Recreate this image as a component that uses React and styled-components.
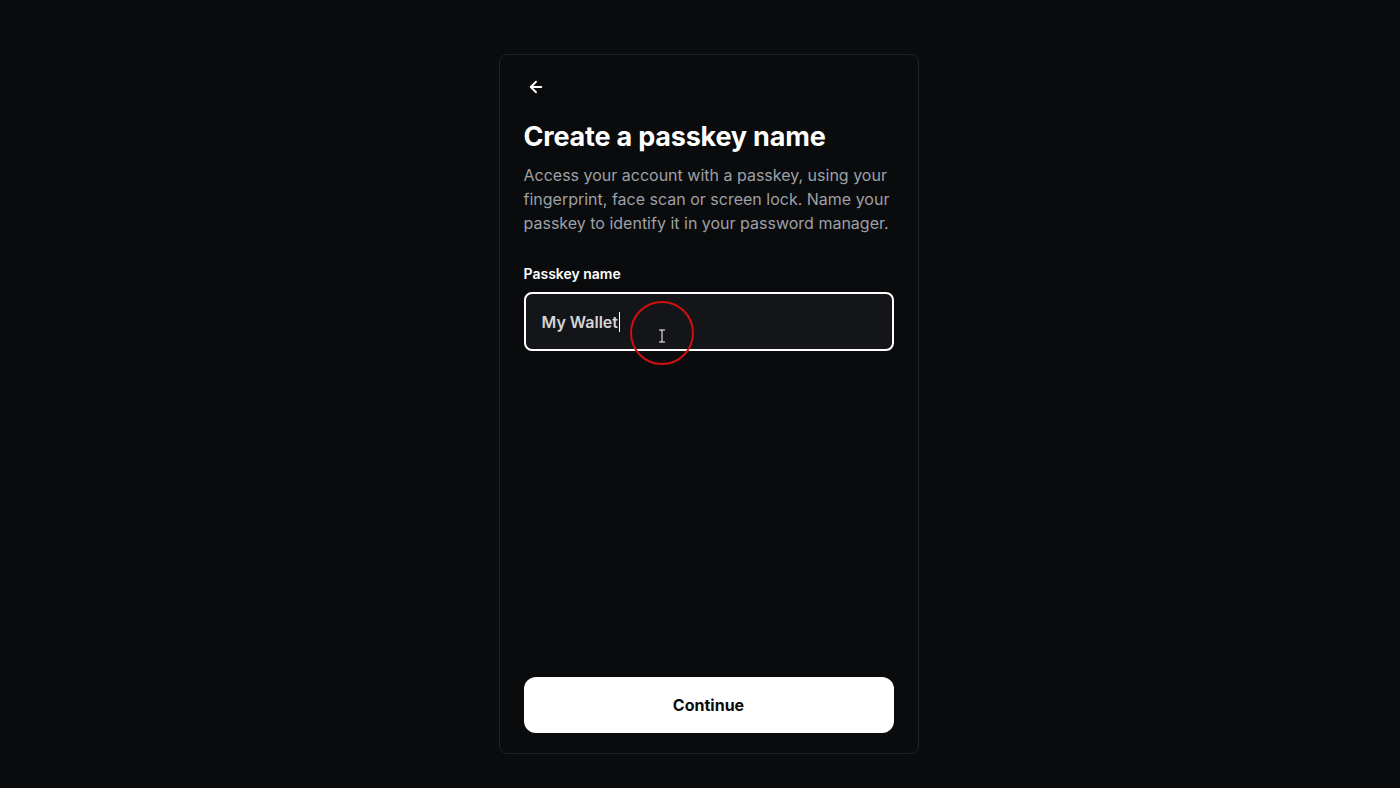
import React from 'react'
import styled, { createGlobalStyle } from 'styled-components'
import { ArrowLeft } from 'lucide-react'

const GlobalStyle = createGlobalStyle`
    html, body {
        margin: 0;
        padding: 0;
        background: #0a0b0d;
        font-family: Inter, "Noto Sans", sans-serif;
    }
`;

const Page = styled.div`
    min-height: 788px;
    display: flex;
    justify-content: center;
    padding: 54px 0 0 17px;
    box-sizing: border-box;
`;

const Card = styled.div`
    width: 420px;
    height: 700px;
    box-sizing: border-box;
    border: 1px solid #1f2124;
    border-radius: 8px;
    background: #0a0b0d;
    padding: 24px 24px 20px;
    display: flex;
    flex-direction: column;
`;

const BackButton = styled.button`
    width: 24px;
    height: 16px;
    padding: 0;
    margin: 0 0 0 3px;
    border: none;
    background: none;
    color: #fff;
    display: flex;
    align-items: center;
    cursor: pointer;
`;

const Title = styled.h1`
    margin: 24px 0 0;
    font-size: 27px;
    line-height: 36px;
    font-weight: 700;
    letter-spacing: -0.2px;
    color: #fff;
`;

const Description = styled.p`
    margin: 8px 0 0;
    font-size: 16px;
    line-height: 24px;
    color: #9ea0a7;
`;

const Label = styled.label`
    display: block;
    margin: 29px 0 0;
    font-size: 14px;
    line-height: 20px;
    font-weight: 600;
    color: #fff;
`;

const InputWrap = styled.div`
    position: relative;
    margin-top: 8px;
`;

const Input = styled.div`
    height: 59px;
    box-sizing: border-box;
    border: 2px solid #fff;
    border-radius: 8px;
    background: #141518;
    padding: 0 16px;
    display: flex;
    align-items: center;
    font-size: 16px;
    font-weight: 600;
    color: #d4d5d8;
`;

const Caret = styled.span`
    display: inline-block;
    width: 1px;
    height: 20px;
    background: #fff;
    margin-left: 1px;
`;

const ClickMark = styled.div`
    position: absolute;
    left: 106px;
    top: 9px;
    width: 64px;
    height: 64px;
    box-sizing: border-box;
    border: 2px solid #d00f0f;
    border-radius: 50%;
    display: flex;
    align-items: center;
    justify-content: center;
    padding-top: 5px;
    pointer-events: none;
`;

const Spacer = styled.div`
    flex: 1;
`;

const PrimaryButton = styled.button`
    height: 56px;
    width: 100%;
    border: none;
    border-radius: 12px;
    background: #fff;
    color: #0a0b0d;
    font-family: Inter, "Noto Sans", sans-serif;
    font-size: 16px;
    font-weight: 700;
    cursor: pointer;
`;

const App = () => (
    <>
        <GlobalStyle />
        <Page>
            <Card>
                <BackButton aria-label="Back">
                    <ArrowLeft size={18} strokeWidth={2.5} />
                </BackButton>
                <Title>Create a passkey name</Title>
                <Description>
                    Access your account with a passkey, using your fingerprint, face scan or screen lock. Name your passkey to identify it in your password manager.
                </Description>
                <Label>Passkey name</Label>
                <InputWrap>
                    <Input>
                        My Wallet<Caret />
                    </Input>
                    <ClickMark>
                        <svg width="8" height="14" viewBox="0 0 8 14">
                            <path d="M1 1h6M4 1v12M1 13h6" stroke="#fff" strokeWidth="1" fill="none" />
                        </svg>
                    </ClickMark>
                </InputWrap>
                <Spacer />
                <PrimaryButton>Continue</PrimaryButton>
            </Card>
        </Page>
    </>
);

export default App;
